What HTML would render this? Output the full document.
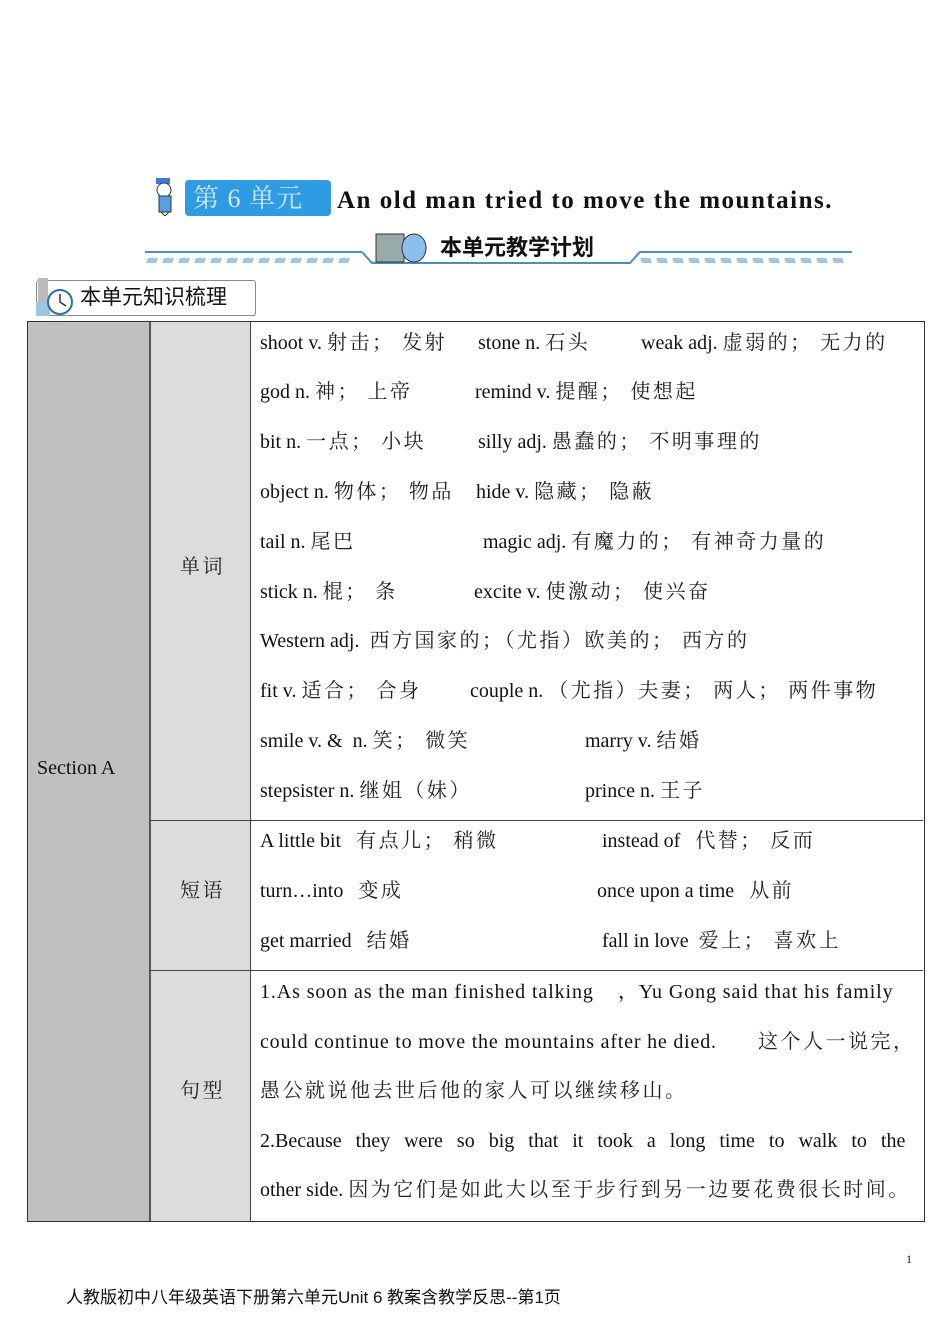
<!DOCTYPE html><html><head><meta charset="utf-8"><style>
body{margin:0;width:950px;height:1344px;background:#fff;position:relative;font-family:"Liberation Serif","Noto Serif CJK SC",serif;overflow:hidden}
.a{position:absolute;white-space:nowrap;font-size:20px;line-height:24px;color:#111}
i{font-style:normal;letter-spacing:2.5px;color:#222}
.b{position:absolute}
</style></head><body>
<div class="b" style="left:150px;top:174px;width:32px;height:42px">
<svg width="32" height="42"><rect x="6" y="4" width="14" height="6" fill="#3a7bd5"/><circle cx="14" cy="16" r="7" fill="#fff" stroke="#333"/><rect x="9" y="22" width="12" height="16" fill="#5aa0e0" stroke="#333"/><path d="M11 38 L15 42 L19 38" stroke="#333" fill="none"/></svg></div>
<div class="b" style="left:185px;top:180px;width:146px;height:36px;background:#2f9be3;border-radius:4px"></div>
<div class="a" style="left:193px;top:184px;font-size:26px;line-height:30px;color:#cfe8ff;letter-spacing:1px">第 6 单元</div>
<div class="a" style="left:337px;top:186px;font-size:25px;line-height:30px;font-weight:bold;color:#111;letter-spacing:1.5px">An old man tried to move the mountains.</div>
<svg class="b" style="left:140px;top:228px" width="715" height="40">
<line x1="5" y1="24" x2="222" y2="24" stroke="#4a8fbf" stroke-width="2"/>
<path d="M222 24 L232 35 L490 35 L500 24 L712 24" stroke="#4a8fbf" stroke-width="2" fill="none"/>
<g fill="#9cc4e4">
<path d="M8 30h10l-2 5h-10z M24 30h10l-2 5h-10z M40 30h10l-2 5h-10z M56 30h10l-2 5h-10z M72 30h10l-2 5h-10z M88 30h10l-2 5h-10z M104 30h10l-2 5h-10z M120 30h10l-2 5h-10z M136 30h10l-2 5h-10z M152 30h10l-2 5h-10z M168 30h10l-2 5h-10z M184 30h10l-2 5h-10z M200 30h10l-2 5h-10z"/>
<path d="M500 30h10l2 5h-10z M516 30h10l2 5h-10z M532 30h10l2 5h-10z M548 30h10l2 5h-10z M564 30h10l2 5h-10z M580 30h10l2 5h-10z M596 30h10l2 5h-10z M612 30h10l2 5h-10z M628 30h10l2 5h-10z M644 30h10l2 5h-10z M660 30h10l2 5h-10z M676 30h10l2 5h-10z M692 30h10l2 5h-10z"/></g>
<rect x="236" y="6" width="28" height="28" fill="#9aa" stroke="#333"/><ellipse cx="274" cy="20" rx="12" ry="14" fill="#8cc0ec" stroke="#333"/>
</svg>
<div class="a" style="left:440px;top:234px;font-size:22px;line-height:28px;font-weight:bold;font-family:'Liberation Sans','Noto Sans CJK SC',sans-serif">本单元教学计划</div>
<div class="b" style="left:36px;top:280px;width:218px;height:34px;border:1px solid #888;border-radius:3px;background:#fff"></div>
<svg class="b" style="left:36px;top:276px" width="42" height="42"><rect x="2" y="2" width="10" height="30" fill="#bbb"/><rect x="0" y="26" width="14" height="14" fill="#9cc4e4"/><circle cx="24" cy="26" r="12" fill="#fff" stroke="#2a6fb0" stroke-width="2"/><path d="M24 18V26L30 30" stroke="#333" fill="none" stroke-width="1.5"/></svg>
<div class="a" style="left:80px;top:284px;font-size:21px;line-height:28px;font-family:'Liberation Sans','Noto Sans CJK SC',sans-serif">本单元知识梳理</div>
<div class="b" style="left:27px;top:321px;width:896px;height:899px;border:1px solid #333"></div>
<div class="b" style="left:28px;top:322px;width:121px;height:899px;background:#c0c0c0;border-right:2px solid #555"></div>
<div class="b" style="left:151px;top:322px;width:99px;height:899px;background:#dcdcdc;border-right:1px solid #444"></div>
<div class="b" style="left:149px;top:820px;width:774px;height:1px;background:#444"></div>
<div class="b" style="left:149px;top:970px;width:774px;height:1px;background:#444"></div>
<div class="a" style="left:37px;top:756px">Section A</div>
<div class="a" style="left:180px;top:555px"><i>单词</i></div>
<div class="a" style="left:180px;top:879px"><i>短语</i></div>
<div class="a" style="left:180px;top:1079px"><i>句型</i></div>
<div class="a" style="left:260px;top:331px">shoot v. <i>射击； 发射</i></div>
<div class="a" style="left:478px;top:331px">stone n. <i>石头</i></div>
<div class="a" style="left:641px;top:331px">weak adj. <i>虚弱的； 无力的</i></div>
<div class="a" style="left:260px;top:380px">god n. <i>神； 上帝</i></div>
<div class="a" style="left:475px;top:380px">remind v. <i>提醒； 使想起</i></div>
<div class="a" style="left:260px;top:430px">bit n. <i>一点； 小块</i></div>
<div class="a" style="left:478px;top:430px">silly adj. <i>愚蠢的； 不明事理的</i></div>
<div class="a" style="left:260px;top:480px">object n. <i>物体； 物品</i></div>
<div class="a" style="left:476px;top:480px">hide v. <i>隐藏； 隐蔽</i></div>
<div class="a" style="left:260px;top:530px">tail n. <i>尾巴</i></div>
<div class="a" style="left:483px;top:530px">magic adj. <i>有魔力的； 有神奇力量的</i></div>
<div class="a" style="left:260px;top:580px">stick n. <i>棍； 条</i></div>
<div class="a" style="left:474px;top:580px">excite v. <i>使激动； 使兴奋</i></div>
<div class="a" style="left:260px;top:629px">Western adj.&nbsp; <i>西方国家的；（尤指）欧美的； 西方的</i></div>
<div class="a" style="left:260px;top:679px">fit v. <i>适合； 合身</i></div>
<div class="a" style="left:470px;top:679px">couple n. <i>（尤指）夫妻； 两人； 两件事物</i></div>
<div class="a" style="left:260px;top:729px">smile v. &amp;&nbsp; n. <i>笑； 微笑</i></div>
<div class="a" style="left:585px;top:729px">marry v. <i>结婚</i></div>
<div class="a" style="left:260px;top:779px">stepsister n. <i>继姐（妹）</i></div>
<div class="a" style="left:585px;top:779px">prince n. <i>王子</i></div>
<div class="a" style="left:260px;top:829px">A little bit&nbsp;&nbsp; <i>有点儿； 稍微</i></div>
<div class="a" style="left:602px;top:829px">instead of&nbsp;&nbsp; <i>代替； 反而</i></div>
<div class="a" style="left:260px;top:879px">turn…into&nbsp;&nbsp; <i>变成</i></div>
<div class="a" style="left:597px;top:879px">once upon a time&nbsp;&nbsp; <i>从前</i></div>
<div class="a" style="left:260px;top:929px">get married&nbsp;&nbsp; <i>结婚</i></div>
<div class="a" style="left:602px;top:929px">fall in love&nbsp; <i>爱上； 喜欢上</i></div>
<div class="a" style="left:260px;top:980px;letter-spacing:0.9px">1.As soon as the man finished talking</div>
<div class="a" style="left:618px;top:980px;letter-spacing:0.9px">，Yu Gong said that his family</div>
<div class="a" style="left:260px;top:1030px;letter-spacing:0.8px">could continue to move the mountains after he died.</div>
<div class="a" style="left:758px;top:1030px"><i>这个人一说完，</i></div>
<div class="a" style="left:260px;top:1079px"><i>愚公就说他去世后他的家人可以继续移山。</i></div>
<div class="a" style="left:260px;top:1129px;word-spacing:9px">2.Because they were so big that it took a long time to walk to the</div>
<div class="a" style="left:260px;top:1178px">other side. <i>因为它们是如此大以至于步行到另一边要花费很长时间。</i></div>
<div class="a" style="left:906px;top:1252px;font-size:12px;line-height:14px">1</div>
<div class="a" style="left:66px;top:1287px;font-size:17px;line-height:22px;font-family:'Liberation Sans','Noto Sans CJK SC',sans-serif">人教版初中八年级英语下册第六单元Unit 6 教案含教学反思--第1页</div>
</body></html>
